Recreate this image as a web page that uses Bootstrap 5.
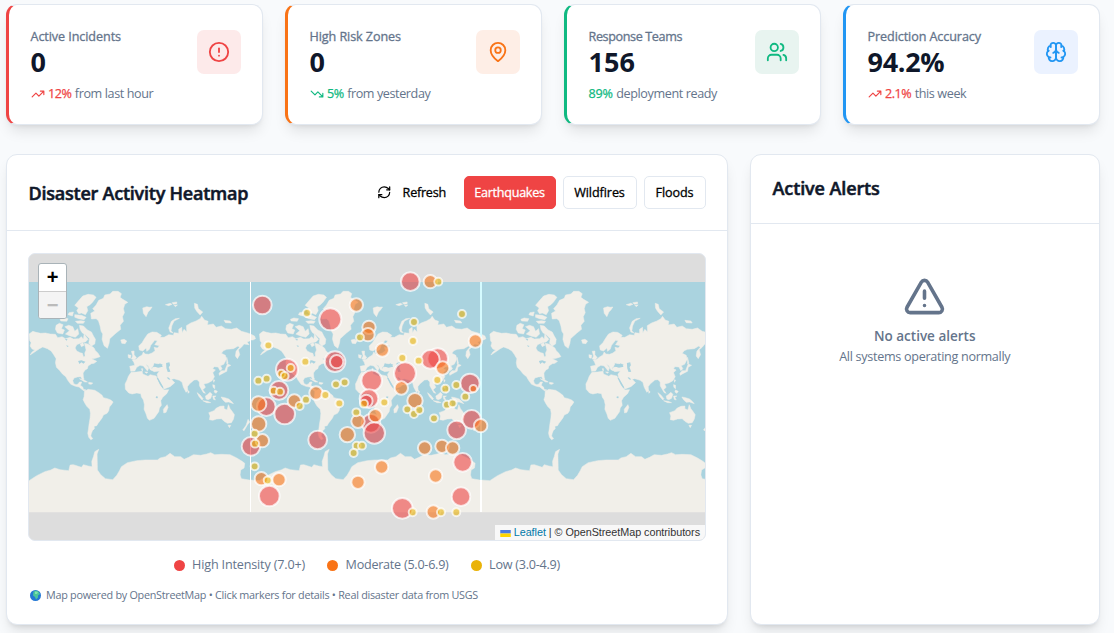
<!DOCTYPE html>
<html lang="en">
<head>
<meta charset="utf-8">
<meta name="viewport" content="width=device-width, initial-scale=1">
<title>Disaster Dashboard</title>
<link href="https://cdn.jsdelivr.net/npm/bootstrap@5.3.0/dist/css/bootstrap.min.css" rel="stylesheet">
<script src="https://cdn.jsdelivr.net/npm/bootstrap@5.3.0/dist/js/bootstrap.bundle.min.js"></script>
<style>
:root{--ink:#0f172a;--muted:#64748b;--line:#e2e8f0;--red:#ef4444;--orange:#f97316;--green:#10b981;--blue:#2196f3}
body{font-family:"Open Sans","Noto Sans",sans-serif;font-size:12.6px;line-height:18px;color:var(--ink);background:#f8fafc;height:633px;overflow:hidden}
.dash{width:1106.4px;padding:4px 6.9px 0 6px}
.dash .row{--bs-gutter-x:22.5px}
.panel{background:#fff;border:1px solid var(--line);border-radius:11px;box-shadow:0 9px 13.5px -3px rgba(0,0,0,.1),0 3.6px 5.4px -3.6px rgba(0,0,0,.1)}
.stat{height:121px;padding:23px 21px 0 21.5px;border-left:3px solid var(--tone)}
.stat-title{color:var(--muted);font-weight:500;letter-spacing:-.08px;-webkit-text-stroke:.3px var(--muted)}
.figure-num{font-size:27px;font-weight:700;line-height:32px;height:32px}
.stat-note{color:var(--muted);margin-top:7px;gap:3.5px}
.stat-note b{font-weight:500;letter-spacing:-.5px;-webkit-text-stroke:.25px}
.l3{letter-spacing:-.39px}
.tile{width:44px;height:44px;border-radius:7px;color:var(--tone);margin-top:2px}
.ic{fill:none;stroke:currentColor;stroke-width:2;stroke-linecap:round;stroke-linejoin:round;flex:none}
.t-red{--tone:#ef4444}.t-orange{--tone:#f97316}.t-green{--tone:#10b981}.t-blue{--tone:#2196f3}
.c-red{color:var(--red)}.c-green{color:var(--green)}
.main-row{margin-top:29px}
.main-row .panel{height:471px}
.head{border-bottom:1px solid var(--line);padding:0 21px 0 21.5px}
.head h2{font-size:18px;font-weight:600;line-height:26px;margin:0;-webkit-text-stroke:.55px}
.tool{height:33px;font-size:12.6px;font-weight:500;border:1px solid var(--line);border-radius:5px;padding:2px 0 0;display:flex;align-items:center;justify-content:center;-webkit-text-stroke:.3px;background:#fff;color:#000}
.tool.on{background:var(--red);border-color:var(--red);color:#fff}
.map{height:288px;margin:22px 21px 0 21px;border:1px solid var(--line);border-radius:7px;background:#ddd;overflow:hidden;position:relative}
.map>svg{display:block}
.zoomer{position:absolute;left:9px;top:9px;width:29px;border:1px solid #a9b3b8;border-radius:3px;overflow:hidden;background:#fff;color:#000}
.zoomer div{height:27px;font:700 20px/27px "Liberation Sans",sans-serif;text-align:center}
.zoomer div+div{border-top:1px solid #ccc;background:#f4f4f4;color:#bbb}
.credit{position:absolute;right:0;bottom:0;height:15px;padding:0 4.5px;background:rgba(255,255,255,.8);font:10.8px/15px "Liberation Sans",sans-serif;color:#333;letter-spacing:-.04px;white-space:nowrap}
.credit span{color:#0078a8}
.legend-row{color:var(--muted);margin-top:15px;gap:22px}
.dot{width:11px;height:11px;border-radius:50%;background:var(--tone);margin-right:7.5px}
.foot{font-size:10.8px;color:var(--muted);letter-spacing:-.263px;margin:12px 0 0 23px;gap:5px}
</style>
</head>
<body>
<main class="dash">
  <div class="row">
    <div class="col-3"><section class="panel stat t-red d-flex justify-content-between">
      <div><div class="stat-title">Active Incidents</div><div class="figure-num">0</div>
      <div class="stat-note d-flex align-items-center"><svg class="ic c-red" width="14" height="14" viewBox="0 0 24 24"><path d="M22 7 13.5 15.5 8.5 10.5 2 17M16 7h6v6"/></svg><b class="c-red">12%</b><span class="l3">from last hour</span></div></div>
      <div class="tile d-flex align-items-center justify-content-center" style="background:#fdeaea"><svg class="ic" width="22" height="22" viewBox="0 0 24 24"><circle cx="12" cy="12" r="10"/><path d="M12 8v4M12 16h.01"/></svg></div>
    </section></div>
    <div class="col-3"><section class="panel stat t-orange d-flex justify-content-between">
      <div><div class="stat-title">High Risk Zones</div><div class="figure-num">0</div>
      <div class="stat-note d-flex align-items-center"><svg class="ic c-green" width="14" height="14" viewBox="0 0 24 24"><path d="M22 17 13.5 8.5 8.5 13.5 2 7M16 17h6v-6"/></svg><b class="c-green">5%</b><span style="letter-spacing:-.41px">from yesterday</span></div></div>
      <div class="tile d-flex align-items-center justify-content-center" style="background:#feeee6"><svg class="ic" width="22" height="22" viewBox="0 0 24 24"><path d="M20 10c0 6-8 12-8 12s-8-6-8-12a8 8 0 0 1 16 0Z"/><circle cx="12" cy="10" r="3"/></svg></div>
    </section></div>
    <div class="col-3"><section class="panel stat t-green d-flex justify-content-between">
      <div><div class="stat-title" style="letter-spacing:-.38px">Response Teams</div><div class="figure-num">156</div>
      <div class="stat-note d-flex align-items-center"><b class="c-green" style="letter-spacing:-.2px">89%</b><span class="l3">deployment ready</span></div></div>
      <div class="tile d-flex align-items-center justify-content-center" style="background:#e8f4f0"><svg class="ic" width="22" height="22" viewBox="0 0 24 24"><path d="M16 21v-2a4 4 0 0 0-4-4H6a4 4 0 0 0-4 4v2"/><circle cx="9" cy="7" r="4"/><path d="M22 21v-2a4 4 0 0 0-3-3.87M16 3.13a4 4 0 0 1 0 7.75"/></svg></div>
    </section></div>
    <div class="col-3"><section class="panel stat t-blue d-flex justify-content-between">
      <div><div class="stat-title" style="letter-spacing:-.09px">Prediction Accuracy</div><div class="figure-num" style="letter-spacing:-.3px">94.2%</div>
      <div class="stat-note d-flex align-items-center"><svg class="ic c-red" width="14" height="14" viewBox="0 0 24 24"><path d="M22 7 13.5 15.5 8.5 10.5 2 17M16 7h6v6"/></svg><b class="c-red">2.1%</b><span class="l3">this week</span></div></div>
      <div class="tile d-flex align-items-center justify-content-center" style="background:#ebf2ff"><svg class="ic" width="22" height="22" viewBox="0 0 24 24"><path d="M12 5a3 3 0 1 0-5.997.125 4 4 0 0 0-2.526 5.77 4 4 0 0 0 .556 6.588A4 4 0 1 0 12 18Z"/><path d="M12 5a3 3 0 1 1 5.997.125 4 4 0 0 1 2.526 5.77 4 4 0 0 1-.556 6.588A4 4 0 1 1 12 18Z"/><path d="M15 13a4.5 4.5 0 0 1-3-4 4.5 4.5 0 0 1-3 4M17.599 6.5a3 3 0 0 0 .399-1.375M6.003 5.125A3 3 0 0 0 6.401 6.5M3.477 10.896a4 4 0 0 1 .585-.396M19.938 10.5a4 4 0 0 1 .585.396M6 18a4 4 0 0 1-1.967-.516M19.967 17.484A4 4 0 0 1 18 18"/></svg></div>
    </section></div>
  </div>

  <div class="row main-row">
    <div class="col-8"><section class="panel">
      <div class="head d-flex align-items-center" style="height:76px">
        <h2 class="me-auto" style="letter-spacing:-.23px">Disaster Activity Heatmap</h2>
        <div class="d-flex" style="gap:7px">
          <button class="btn tool border-0" style="width:90px;gap:11px;letter-spacing:-.25px"><svg class="ic" style="margin-top:-3px" width="14.5" height="14.5" viewBox="0 0 24 24"><path d="M3 12a9 9 0 0 1 9-9 9.75 9.75 0 0 1 6.74 2.74L21 8"/><path d="M21 3v5h-5M21 12a9 9 0 0 1-9 9 9.75 9.75 0 0 1-6.74-2.74L3 16"/><path d="M8 16H3v5"/></svg>Refresh</button>
          <button class="btn tool on" style="width:92px;letter-spacing:-.27px">Earthquakes</button>
          <button class="btn tool" style="width:74px;letter-spacing:-.08px">Wildfires</button>
          <button class="btn tool" style="width:62px;letter-spacing:-.08px">Floods</button>
        </div>
      </div>
      <div class="map">
        <svg width="678" height="286" viewBox="29 254 678 286" aria-label="World map">
          <defs>
            <g id="world">
              <path fill="#aad3df" d="M0 96H691.5V786H0Z"/>
              <g fill="#f1efe9" stroke="#f1efe9" stroke-width="1.5" stroke-linejoin="round">
                <path d="M28 262 27 252 38 244 48 247 62 250 76 249 90 252 106 253 113 263 126 260 136 266 150 262 160 267 176 266 184 260 190 268 192 252 199 262 204 268 196 276 184 278 170 284 165 294 170 303 180 308 187 310 190 320 195 319 194 309 198 300 195 288 193 280 203 282 214 288 222 294 226 302 234 310 240 320 226 325 215 326 222 330 230 334 222 340 214 341 204 348 202 356 195 360 189 369 190 382 192 388 187 389 182 380 172 381 162 384 158 392 161 401 168 404 174 402 178 396 185 396 181 406 188 411 190 418 198 420 192 423 184 417 177 411 166 409 152 403 143 391 137 380 127 372 118 361 109 352 106 338 108 326 100 313 93 303 82 296 68 291 58 296 48 303 38 310 30 315 36 306 44 300 36 297 30 288 33 278 29 272Z"/>
                <path d="M193 424 204 418 212 419 224 421 236 428 246 436 250 443 262 446 272 450 279 456 274 464 268 471 266 482 261 490 250 495 246 504 240 512 234 520 230 527 222 529 223 536 217 542 214 550 212 558 218 566 212 569 206 562 203 550 205 538 207 522 210 504 211 490 209 478 200 469 194 459 189 449 192 440Z"/>
                <path d="M212 190 224 183 218 176 228 165 236 151 250 145 254 135 270 132 278 124 294 124 304 131 300 142 308 148 323 157 314 163 310 176 313 188 307 200 310 214 300 226 302 238 288 249 278 258 269 266 267 280 262 295 252 287 246 268 248 252 243 244 240 228 235 212 228 206 214 207Z"/>
                <path d="M164 166 174 154 188 138 204 133 220 135 228 142 218 156 210 164 200 170 203 182 196 194 184 189 176 191 170 182 175 174ZM147 188 160 186 157 198 144 194ZM164 194 184 196 198 202 192 209 176 206 164 202ZM120 208 130 204 144 206 140 214 122 213ZM108 226 118 220 129 224 124 236 133 240 128 252 112 249 106 238ZM134 230 146 226 158 230 164 244 173 236 176 252 166 262 150 258 136 252 148 242ZM166 214 182 212 194 214 190 220 172 220ZM178 226 190 228 202 240 214 246 220 258 226 268 224 282 214 288 206 280 208 266 196 254 186 248 180 238ZM180 282 188 278 192 286 184 290Z"/>
                <path d="M302 270 312 268 320 273 315 281 305 280ZM368 174 380 170 388 172 396 171 390 180 384 186 378 200 370 190ZM436 164 450 160 456 163 446 167ZM456 158 470 156 470 161 460 163ZM462 166 472 165 466 170ZM523 160 532 163 535 176 548 186 540 195 530 184 524 174ZM478 205 462 213 455 228 453 242 459 249 450 246 446 234 454 214 466 206ZM612 211 630 213 634 219 616 218Z"/>
                <path d="M334 304 342 303 342 314 349 323 342 329 334 327 338 318ZM324 314 333 316 331 325 325 323Z"/>
                <path d="M329 349 344 346 341 336 337 331 348 328 356 321 366 315 370 306 375 312 386 313 396 309 405 302 402 292 412 294 418 287 404 284 412 272 404 271 392 286 388 298 380 304 378 294 368 303 358 300 356 288 366 278 374 265 383 252 396 246 410 247 424 256 420 262 432 262 446 254 460 256 462 248 476 250 476 238 485 232 486 248 492 238 500 246 499 227 512 219 528 213 540 206 545 199 553 210 564 214 562 225 580 222 588 232 604 228 616 236 634 238 650 234 664 244 680 248 691 252 691 272 681 276 687 284 672 282 664 292 655 299 659 314 652 326 646 318 648 304 658 292 654 288 640 296 620 298 610 302 604 310 616 316 619 328 611 343 601 347 606 356 600 362 594 351 582 350 578 356 586 360 578 368 583 380 576 392 564 399 551 402 556 412 548 419 556 430 550 428 543 416 538 407 538 396 531 389 522 390 508 402 502 410 503 422 498 427 490 412 486 397 478 391 462 386 454 388 464 398 450 410 432 417 423 403 414 386 411 373 418 363 402 365 394 360 398 352 410 350 426 350 428 342 412 341 402 339 400 347 394 354 397 362 390 359 384 347 377 343 386 354 382 363 370 348 360 346 350 352 344 363 332 364Z"/>
                <path d="M333 367 350 366 366 364 368 372 384 379 390 374 408 378 416 396 424 410 432 420 446 419 440 431 428 442 422 452 424 466 418 474 416 485 409 495 402 505 388 511 382 505 378 492 372 478 373 464 370 450 364 441 362 431 350 429 336 432 326 429 316 418 315 402 321 390 325 379ZM441 464 444 472 438 487 431 489 430 478Z"/>
                <path d="M566 488 582 482 588 475 600 469 612 468 612 476 621 480 625 464 630 476 636 484 643 494 640 508 634 518 622 520 612 514 604 506 590 507 578 511 568 509 570 498ZM624 526 632 526 628 533ZM684 508 689 516 682 525 672 542 668 540 678 526Z"/>
                <path d="M556 438 562 434 570 427 576 433 572 445 564 449 558 447ZM531 428 540 435 549 446 546 450 537 440ZM548 452 562 454 572 458 560 458ZM578 438 588 438 582 442 586 450 580 448ZM603 441 614 443 626 447 634 454 640 461 626 456 616 457 608 449ZM578 404 584 406 584 416 579 412ZM584 420 592 424 588 430 582 426ZM580 389 584 390 581 397ZM503 421 508 426 504 430ZM597 370 604 362 614 362 618 352 622 342 632 346 622 352 620 364 606 371 598 376ZM620 322 624 340 620 342ZM178 386 192 390 202 396 194 396ZM206 397 218 399 214 403 206 402ZM364 356 368 356 367 364ZM374 366 383 366 380 370Z"/>
                <path d="M0 690 27 692 36 686 50 677 74 665 92 660 104 654 120 659 146 662 150 645 160 644 184 652 190 644 204 648 216 650 215 634 220 620 224 605 236 598 231 612 232 660 242 674 256 686 278 689 290 676 298 662 304 650 322 638 350 632 374 630 412 630 420 624 436 620 450 610 464 620 482 620 492 628 506 622 520 614 542 616 560 612 572 608 584 614 604 613 630 614 650 624 666 634 674 640 672 654 662 660 660 675 664 686 692 691V786H0Z"/>
                <path d="M0 252 12 258 15 266 8 270 0 270Z"/>
              </g>
              <g fill="#aad3df">
                <path d="M400 349 404 341 413 345 420 340 428 350 414 353ZM438 339 448 337 450 346 446 352 451 365 443 366 439 355ZM174 333 184 331 196 335 190 341 184 337 178 342ZM408 439 414 440 412 445 407 444ZM410 384 414 384 430 412 428 415 420 404Z"/>
                <path d="M440 383 444 382 451 388 447 389ZM134 268 142 267 140 272ZM118 251 122 257 116 258ZM138 286 146 288 142 291Z"/>
              </g>
            </g>
          </defs>
          <use href="#world" transform="translate(20.1 250) scale(.3333)"/>
          <use href="#world" transform="translate(250.5 250) scale(.3333)"/>
          <use href="#world" transform="translate(480.9 250) scale(.3333)"/>
          <path fill="#fff" d="M250 282h1v230h-1z"/>
          <path fill="#fff" d="M480 282h2v230h-2z"/>
          <path fill="#d5fbff" d="M480 282h2v198h-2z"/>
          <g id="quakes" transform="translate(240 250) scale(.3333)" stroke="#fff" stroke-opacity=".72" stroke-width="6" fill-opacity=".6"></g>
        </svg>
        <div class="zoomer"><div>+</div><div>−</div></div>
        <div class="credit"><svg width="11" height="7" viewBox="0 0 12 8" style="margin-right:3px"><path fill="#4c7be1" d="M0 0h12v4H0z"/><path fill="#ffd500" d="M0 4h12v4H0z"/></svg><span>Leaflet</span> | © OpenStreetMap contributors</div>
      </div>
      <div class="legend-row d-flex justify-content-center">
        <div class="d-flex align-items-center t-red"><i class="dot"></i><span style="letter-spacing:-.163px">High Intensity (7.0+)</span></div>
        <div class="d-flex align-items-center t-orange"><i class="dot"></i><span style="letter-spacing:-.253px">Moderate (5.0-6.9)</span></div>
        <div class="d-flex align-items-center" style="--tone:#eab308"><i class="dot"></i><span style="letter-spacing:-.25px">Low (3.0-4.9)</span></div>
      </div>
      <div class="foot d-flex align-items-center"><svg width="11" height="11" viewBox="0 0 22 22"><circle cx="11" cy="11" r="11" fill="#2478d4"/><path d="M7 3 12 1 17 3 20 8 16 11 16 15 12 19 10 14 6 11Z" fill="#4cc59a"/><path d="M10 3 16 4 14 8 10 8Z" fill="#80e5b0"/></svg><span>Map powered by OpenStreetMap • Click markers for details • Real disaster data from USGS</span></div>
    </section></div>

    <div class="col-4"><section class="panel">
      <div class="head d-flex align-items-center" style="height:69px;padding-bottom:2px"><h2 style="letter-spacing:-.1px">Active Alerts</h2></div>
      <div class="text-center" style="color:var(--muted);padding-top:51px">
        <svg class="ic d-block mx-auto" width="43" height="43" viewBox="0 0 24 24"><path d="m21.73 18-8-14a2 2 0 0 0-3.48 0l-8 14A2 2 0 0 0 4 21h16a2 2 0 0 0 1.73-3ZM12 9v4M12 17h.01"/></svg>
        <div style="font-size:13.5px;font-weight:600;line-height:21px;margin-top:8px">No active alerts</div>
        <div style="letter-spacing:-.3px;line-height:19px">All systems operating normally</div>
      </div>
    </section></div>
  </div>
</main>
<script>
// Marker positions on the map plane: x, y, radius
const quakes = {
  '#ef4444': [[67,165,27],[511,95,27],[271,208,32],[141,359,32],[285,335,30],[290,335,19],[395,392,30],[495,370,32],[593,326,30],[571,328,27],[690,400,28],[117,421,27],[79,470,27],[134,492,30],[387,446,27],[379,453,18],[233,570,27],[33,589,27],[393,520,27],[403,549,31],[88,738,30],[487,775,30],[663,740,27],[668,637,27],[650,540,27],[695,508,27]],
  '#f97316': [[349,165,19],[387,232,19],[384,254,19],[427,300,19],[571,95,19],[706,273,19],[608,354,19],[484,414,19],[700,416,11],[228,429,19],[163,453,19],[525,452,22],[56,462,22],[56,522,22],[67,572,19],[322,554,22],[354,514,19],[406,497,19],[64,686,19],[117,689,19],[425,651,19],[354,697,19],[554,594,19],[606,589,19],[638,594,19],[587,678,19],[580,786,19],[722,527,19]],
  '#eab308': [[201,189],[360,262],[595,95],[666,192],[522,216],[519,273],[85,286],[196,335],[487,324],[536,332],[592,390],[616,416],[649,405],[676,440],[55,392],[80,386],[288,403],[314,397],[256,435],[198,449],[152,354],[124,371],[134,378],[101,422],[120,425],[179,468],[298,460],[349,487],[433,457],[372,461],[502,478],[522,492],[538,480],[582,505],[621,464],[638,460],[44,551],[45,581],[350,587],[366,587],[341,609],[44,649],[83,691],[518,787],[603,787],[649,787]]
};
const layer = document.getElementById('quakes');
for (const [color, list] of Object.entries(quakes))
  for (const [x, y, r = 11.8] of list) {
    const c = document.createElementNS('http://www.w3.org/2000/svg', 'circle');
    c.setAttribute('cx', x); c.setAttribute('cy', y); c.setAttribute('r', r > 12 ? r + 1 : r);
    c.setAttribute('fill', color);
    layer.append(c);
  }
</script>
</body>
</html>
